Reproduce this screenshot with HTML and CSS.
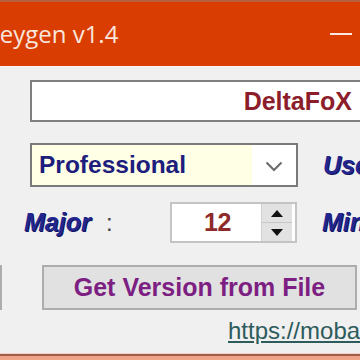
FILE: index.html
```html
<!DOCTYPE html>
<html>
<head>
<meta charset="utf-8">
<link rel="stylesheet" href="styles.css">
</head>
<body>
<div class="window">
  <div class="titlebar">
    <span class="title">Keygen v1.4</span>
    <span class="min-btn"></span>
  </div>
  <div class="client">
    <div class="row r1">
      <div class="textbox">DeltaFoX</div>
    </div>
    <div class="row r2">
      <div class="combo">
        <span class="combo-text">Professional</span>
        <span class="combo-btn">
          <svg width="18" height="11" viewBox="0 0 18 11"><path d="M1.5 1.5 L9 9 L16.5 1.5" fill="none" stroke="#6a6a6a" stroke-width="2"/></svg>
        </span>
      </div>
      <span class="lbl lbl-right">User</span>
    </div>
    <div class="row r3">
      <span class="lbl lbl-major">Major</span>
      <span class="colon">:</span>
      <div class="num">
        <span class="num-val">12</span>
        <div class="spin">
          <span class="spin-part"><svg width="12" height="7" viewBox="0 0 12 7"><path d="M6 0 L12 7 L0 7 Z" fill="#111"/></svg></span>
          <span class="spin-part"><svg width="12" height="7" viewBox="0 0 12 7"><path d="M0 0 L12 0 L6 7 Z" fill="#111"/></svg></span>
        </div>
      </div>
      <span class="lbl lbl-right">Minor</span>
    </div>
    <div class="row r4">
      <button class="btn btn-side"></button>
      <button class="btn">Get Version from File</button>
      <button class="btn btn-side"></button>
    </div>
    <div class="row r5">
      <a class="link">https://mobaxterm.mobatek.net</a>
    </div>
  </div>
  <div class="frame-bottom"></div>
</div>
</body>
</html>
```

FILE: styles.css
```css
html, body {
  margin: 0;
  padding: 0;
  width: 360px;
  height: 360px;
  overflow: hidden;
  background: #f0f0f0;
}

.window {
  width: 360px;
  font-family: "Liberation Sans", Arial, sans-serif;
}

.titlebar {
  height: 64px;
  border-top: 2px solid #b5603e;
  background: #d93d02;
  display: flex;
  align-items: center;
  overflow: hidden;
}

.title {
  font-family: "Open Sans", "Noto Sans", sans-serif;
  font-size: 24px;
  color: #f9e6dd;
  margin-left: -15px;
  margin-top: -2px;
  white-space: nowrap;
}

.min-btn {
  margin-left: auto;
  margin-right: 8px;
  width: 22px;
  height: 2px;
  background: #fbe9e0;
}

.client {
  height: 287px;
  border-top: 1px solid #f7f7f7;
  box-sizing: border-box;
  display: flex;
  flex-direction: column;
}

.row {
  display: flex;
  align-items: center;
  white-space: nowrap;
}

.row > * {
  flex: none;
}

.r1 {
  margin-top: 13px;
  padding-left: 30px;
}

.textbox {
  width: 350px;
  height: 42px;
  box-sizing: border-box;
  border: 2px solid #7f7f7f;
  background: #ffffff;
  text-align: right;
  padding-right: 26px;
  font-weight: bold;
  font-size: 25px;
  line-height: 38px;
  color: #8c1d2b;
}

.r2 {
  margin-top: 21px;
  padding-left: 30px;
}

.combo {
  width: 268px;
  height: 44px;
  box-sizing: border-box;
  border: 2px solid #7a7a7a;
  background: #ffffff;
  display: flex;
}

.combo-text {
  width: 220px;
  background: #ffffe6;
  padding-left: 7px;
  box-sizing: border-box;
  font-weight: bold;
  font-size: 24.5px;
  line-height: 40px;
  color: #1d1d7d;
}

.combo-btn {
  flex: 1;
  display: flex;
  align-items: center;
  justify-content: center;
  padding-top: 2px;
}

.lbl {
  font-weight: bold;
  font-style: italic;
  font-size: 25px;
  color: #22268e;
  text-shadow: 1px 1px 0 #12145a;
}

.lbl-right {
  margin-left: 25px;
}

.r3 {
  margin-top: 15px;
}

.lbl-major {
  box-sizing: border-box;
  width: 106px;
  padding-left: 24px;
}

.colon {
  width: 64px;
  font-size: 24px;
  color: #444;
}

.num {
  width: 127px;
  height: 41px;
  box-sizing: border-box;
  border: 2px solid #c4c4c4;
  background: #ffffff;
  display: flex;
  align-items: center;
}

.num-val {
  flex: 1;
  text-align: center;
  padding-left: 2px;
  font-size: 25px;
  font-weight: bold;
  color: #8e2a2a;
  letter-spacing: -0.5px;
}

.spin {
  width: 30px;
  height: 37px;
  margin-right: 3px;
  background: #e2e2e2;
  border-left: 1px solid #cfcfcf;
  display: flex;
  flex-direction: column;
}

.spin-part {
  flex: 1;
  display: flex;
  align-items: center;
  justify-content: center;
}

.spin-part + .spin-part {
  border-top: 1px solid #c8c8c8;
}

.r4 {
  margin-top: 22px;
}

.btn {
  width: 315px;
  height: 45px;
  margin: 0 40px 0 0;
  padding: 0;
  box-sizing: border-box;
  border: 2px solid #adadad;
  background: #e1e1e1;
  font-family: "Liberation Sans", Arial, sans-serif;
  font-weight: bold;
  font-size: 25px;
  color: #7d1f82;
}

.btn-side:first-child {
  margin-left: -313px;
}

.r5 {
  margin-top: 7px;
  padding-left: 228px;
}

.link {
  font-size: 24px;
  line-height: 28px;
  color: #2e5b5c;
  text-decoration: underline;
}

.frame-bottom {
  height: 7px;
  border-top: 1px solid #f6d2c2;
  background: linear-gradient(#9e5f4d 0, #9e5f4d 2px, #f2a488 2px);
}
```
